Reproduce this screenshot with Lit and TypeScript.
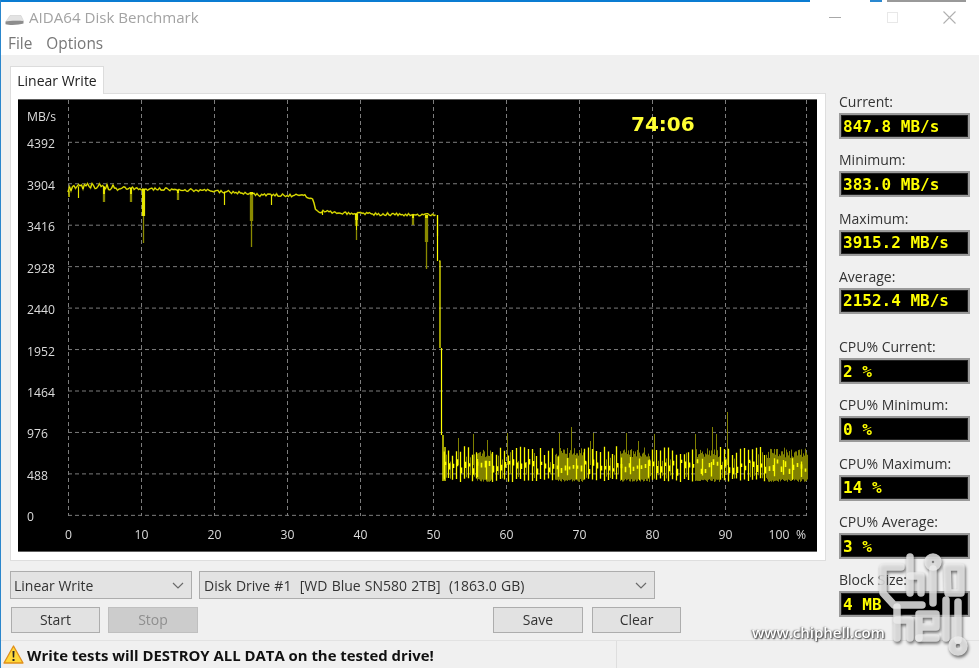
import { LitElement, html, css, svg } from "lit";
import { customElement } from "lit/decorators.js";

function mulberry(a: number) {
  return () => {
    a |= 0; a = (a + 0x6d2b79f5) | 0;
    let t = Math.imul(a ^ (a >>> 15), 1 | a);
    t = (t + Math.imul(t ^ (t >>> 7), 61 | t)) ^ t;
    return ((t ^ (t >>> 14)) >>> 0) / 4294967296;
  };
}

const anchors: [number, number][] = [
  [68, 191], [72, 187], [85, 186], [110, 187], [150, 189], [190, 190], [230, 192], [252, 194],
  [258, 195], [280, 195], [305, 196], [312, 198], [316, 211], [340, 213], [380, 214], [420, 215], [436, 215],
];
function topAt(x: number) {
  for (let i = 0; i < anchors.length - 1; i++) {
    const [a, b] = anchors[i], [c, d] = anchors[i + 1];
    if (x >= a && x <= c) return b + ((d - b) * (x - a)) / (c - a);
  }
  return 215;
}
// [x, bright bottom, dark bottom]
const dips: [number, number, number][] = [
  [68.5, 197, 197], [78, 198, 198], [103, 194, 202], [104, 194, 202], [130, 194, 202], [131, 194, 202],
  [142, 216, 216], [143, 216, 243], [144, 216, 216], [177, 193, 200], [178, 193, 200], [224, 205, 205],
  [250, 192, 221], [251, 192, 247], [252, 192, 221], [271, 205, 205], [322, 215, 215], [355, 220, 226],
  [356, 230, 240], [357, 220, 226], [412, 218, 225], [413, 218, 225], [425, 218, 242], [426, 218, 269],
  [427, 218, 242], [437, 236, 236],
];

function buildPaths() {
  const r = mulberry(91);
  let topBright = "";
  for (let x = 68; x <= 436; x += 1.5) {
    const amp = x < 120 ? 6 : 3;
    const y = topAt(x) + (r() - 0.5) * amp;
    topBright += `${topBright ? "L" : "M"}${x} ${y.toFixed(1)}`;
  }
  let dipDark = "", dipBright = "";
  for (const [x, b, d] of dips) {
    const y = topAt(x);
    dipBright += `M${x + 0.5} ${y}V${b}`;
    dipDark += `M${x + 0.5} ${y}V${d}`;
  }
  const steepBright = "M437.5 215V261M439 261L440 261V348M441.5 348V435";
  let dark = "", bright = "", band = "";
  const darkZones = [[477, 492], [555, 584], [620, 650], [695, 720], [767, 808]];
  const inDark = (x: number) => darkZones.some(([a, b]) => x >= a && x < b);
  for (let x = 443; x <= 807; x++) {
    const px = x + 0.5;
    if (inDark(x)) {
      dark += `M${px} ${(449 + r() * 9).toFixed(1)}V${(479 + r() * 3).toFixed(1)}`;
      if (x % 7 === 0) dark += `M${px} ${(447 + r() * 4).toFixed(1)}V481`;
      if (x % 9 === 0) bright += `M${px} ${(456 + r() * 6).toFixed(1)}V${(474 + r() * 6).toFixed(1)}`;
    } else {
      const k = x % 4;
      if (k === 0) {
        bright += `M${px} ${(446 + r() * 10).toFixed(1)}V${(478 + r() * 4).toFixed(1)}`;
      } else if (k === 2 && r() < 0.6) {
        dark += `M${px} ${(452 + r() * 12).toFixed(1)}V${(474 + r() * 5).toFixed(1)}`;
      }
    }
    if (x % 4 === 1) {
      const y = 459 + r() * 10;
      band += `M${px} ${y.toFixed(1)}v${(3 + r() * 4).toFixed(1)}`;
    }
  }
  for (const [x, y] of [[473, 434], [507, 433], [559, 433], [571, 427], [593, 433], [626, 433], [654, 434], [695, 434], [712, 427], [716, 434], [727, 412], [458, 438], [487, 440], [590, 441], [638, 441]]) {
    dark += `M${x + 0.5} ${y}V465`;
  }
  bright += "M443 435V481M445 447V481";
  return { topBright, dipDark, dipBright, steepBright, dark, bright, band };
}
const P = buildPaths();

const yTicks = [4392, 3904, 3416, 2928, 2440, 1952, 1464, 976, 488, 0];
const yAt = (i: number) => 142.3 + i * 41.45;
const xTicks = [0, 10, 20, 30, 40, 50, 60, 70, 80, 90];
const xAt = (i: number) => 68.5 + i * 73;

const topStats = [
  ["Current:", "847.8 MB/s"],
  ["Minimum:", "383.0 MB/s"],
  ["Maximum:", "3915.2 MB/s"],
  ["Average:", "2152.4 MB/s"],
];
const cpuStats = [
  ["CPU% Current:", "2 %"],
  ["CPU% Minimum:", "0 %"],
  ["CPU% Maximum:", "14 %"],
  ["CPU% Average:", "3 %"],
];

const chevron = svg`<svg class="chev" width="12" height="7" viewBox="0 0 12 7"><path d="M1 1l5 5 5-5" fill="none" stroke="#6a6a6a" stroke-width="1.2"/></svg>`;

@customElement("app-root")
export class AppRoot extends LitElement {
  static styles = css`
    :host {
      display: block; position: relative; width: 979px; height: 668px; overflow: hidden;
      background: #f0f0f0; color: #222;
      font-family: "Open Sans", "Noto Sans", sans-serif; font-size: 14px;
      filter: blur(0.35px);
    }
    .win { display: flex; flex-direction: column; height: 668px; border-left: 1px solid #2a86cc; box-sizing: border-box; }
    .strip {
      height: 2px; flex: none;
      background: linear-gradient(90deg, #0a7cd2 0 809px, #fff 809px 869px, #2a88d0 869px 881px, #fff 881px 886px, #999 886px 965px, #fff 965px);
    }
    .head { height: 53px; flex: none; background: #fff; display: flex; flex-direction: column; }
    .title { height: 28px; box-sizing: border-box; padding-top: 2px; display: flex; align-items: center; padding-left: 4px; gap: 5px; color: #a3a3a3; font-size: 15.1px; }
    .disk { margin-top: 6px; }
    .winbtns { margin-left: auto; display: flex; align-items: center; width: 150px; justify-content: space-between; padding-right: 23px; box-sizing: border-box; }
    .menu { display: flex; gap: 14px; padding-left: 7px; padding-top: 2px; box-sizing: border-box; color: #777; font-size: 15.4px; height: 25px; align-items: center; }
    .body { flex: 1; display: flex; padding-left: 9px; min-height: 0; }
    .left { width: 816px; flex: none; padding-top: 11px; box-sizing: border-box; }
    .tab {
      width: 94px; height: 28px; margin-bottom: -1px; box-sizing: border-box; background: #fff; position: relative; z-index: 1;
      border: 1px solid #dcdcdc; border-bottom: none; display: flex; align-items: center; justify-content: center; font-size: 14px; color: #222;
    }
    .panel { height: 468px; box-sizing: border-box; background: #fff; border: 1px solid #dedede; padding: 5px 8px 8px 7px; }
    .chart { display: block; width: 799px; height: 453px; background: #000; }
    .chart text { font-family: "Open Sans", "Noto Sans", sans-serif; font-size: 12.2px; fill: #dcdcdc; }
    .chart .time { font-family: "DejaVu Sans", sans-serif; font-weight: 700; font-size: 20px; fill: #ffff33; }
    .grid { stroke: #7c7c7c; stroke-width: 1; stroke-dasharray: 4 3; fill: none; }
    .row { display: flex; }
    .r1 { margin-top: 10px; gap: 7px; height: 28px; }
    .combo {
      box-sizing: border-box; height: 28px; background: #e3e3e3; border: 1px solid #adadad;
      display: flex; align-items: center; justify-content: space-between; padding: 0 7px 0 3px; color: #333; font-size: 14px; white-space: pre;
    }
    .c1 { width: 182px; }
    .c2 { width: 456px; word-spacing: .55px; padding-left: 4px; }
    .r2 { margin-top: 8px; padding-left: 1px; height: 26px; }
    .btn {
      box-sizing: border-box; width: 89px; height: 26px; padding-bottom: 2px; background: #e2e2e2; border: 1px solid #adadad;
      display: flex; align-items: center; justify-content: center; color: #333; font-size: 14px;
    }
    .btn.off { background: #cccccc; border-color: #bfbfbf; color: #8f8f8f; width: 90px; margin-left: 8px; }
    .btn.save { margin-left: 295px; width: 90px; }
    .btn.clear { margin-left: 9px; }
    .right { width: 131px; flex: none; margin-left: 13px; padding-top: 39px; box-sizing: border-box; }
    .stat { height: 58.3px; display: flex; flex-direction: column; justify-content: flex-start; }
    .stat .lab { height: 19px; line-height: 15.5px; color: #333; font-size: 14px; white-space: nowrap; }
    .val {
      box-sizing: border-box; height: 26px; background: #000; border: 2px solid #9a9a9a;
      box-shadow: inset 0 0 0 1px #222;
      font-family: "DejaVu Sans Mono", monospace; font-weight: 700; font-size: 16px; color: #ffff00;
      display: flex; align-items: center; padding-left: 2px; white-space: pre;
    }
    .gap { height: 12px; }
    .status { height: 28px; flex: none; display: flex; border-top: 1px solid #e2e2e2; box-sizing: border-box; }
    .msg { width: 616px; flex: none; border-right: 1px solid #dedede; display: flex; align-items: center; gap: 3px; padding-left: 2px; box-sizing: border-box; font-weight: 700; color: #111; font-size: 14.9px; white-space: nowrap; }
    .mark { position: absolute; pointer-events: none; }
    .logo { left: 870px; top: 552px; filter: drop-shadow(1px 2px 1.5px rgba(0,0,0,.65)); }
    .site { left: 752px; top: 622px; font-size: 15px; font-family: "Open Sans", sans-serif; color: #fff; font-weight: 600; text-shadow: 1px 1px 1.5px #333, -1px 0 1.5px #666; white-space: nowrap; }
  `;

  render() {
    const stat = ([l, v]: string[]) => html`<div class="stat"><div class="lab">${l}</div><div class="val">${v}</div></div>`;
    return html`
      <div class="win">
        <div class="strip"></div>
        <div class="head">
          <div class="title">
            <svg class="disk" width="19" height="12" viewBox="0 0 19 12">
              <path d="M1 7.5 5 1.5h11l2.5 5.5z" fill="#e3e3e3" stroke="#cfcfcf" stroke-width=".6"/>
              <path d="M.5 7.5C4 6.5 14 6.5 18.5 7v2.5c-4 1.5-14 2-18 .7z" fill="#8d8d8d"/>
            </svg>
            <span>AIDA64 Disk Benchmark</span>
            <div class="winbtns">
              <svg width="13" height="13" viewBox="0 0 13 13"><path d="M0 6.5h12" stroke="#a8a8a8" stroke-width="1"/></svg>
              <svg width="13" height="13" viewBox="0 0 13 13"><rect x="1.5" y="1.5" width="10" height="10" fill="none" stroke="#e8e8e8"/></svg>
              <svg width="13" height="13" viewBox="0 0 13 13"><path d="M.5.5l12 12M12.5.5l-12 12" stroke="#b0b0b0" stroke-width="1.1"/></svg>
            </div>
          </div>
          <div class="menu"><span>File</span><span>Options</span></div>
        </div>
        <div class="body">
          <div class="left">
            <div class="tab">Linear Write</div>
            <div class="panel">
              <svg class="chart" viewBox="18 99 799 453">
                <path d="M18 99.5H817M18 551.5H817" fill="none" stroke="#5e5e5e"/>
                ${xTicks.map((_, i) => svg`<path class="grid" d="M${xAt(i)} 100V516"/>`)}
                <path class="grid" d="M806.5 100V516"/>
                ${yTicks.map((_, i) => svg`<path class="grid" d="M68 ${yAt(i)}H807"/>`)}
                <text x="27" y="121">MB/s</text>
                ${yTicks.map((t, i) => svg`<text x="27" y=${yAt(i) + 6}>${t}</text>`)}
                ${xTicks.map((t, i) => svg`<text x=${xAt(i)} y="539" text-anchor="middle">${t}</text>`)}
                <text x="779" y="539" text-anchor="middle">100</text>
                <text x="801" y="539" text-anchor="middle">%</text>
                <text class="time" x="631" y="131">74:06</text>
                <g fill="none" stroke-linecap="butt">
                  <path d=${P.dipDark} stroke="#8a8a00" stroke-width="1.3"/>
                  <path d=${P.topBright} stroke="#8a8a00" stroke-width="1.6"/>
                  <path d=${P.dipBright} stroke="#e6e600" stroke-width="1"/>
                  <path d=${P.topBright} stroke="#ffff00" stroke-width=".8"/>
                  <path d=${P.steepBright} stroke="#ffff00" stroke-width="1.2"/>
                  <path d=${P.dark} stroke="#808000" stroke-width="1"/>
                  <path d=${P.bright} stroke="#fafa00" stroke-width="1.3"/>
                  <path d=${P.band} stroke="#ffff00" stroke-width="1.6"/>
                </g>
              </svg>
            </div>
            <div class="row r1">
              <div class="combo c1"><span>Linear Write</span>${chevron}</div>
              <div class="combo c2"><span>Disk Drive #1  [WD Blue SN580 2TB]  (1863.0 GB)</span>${chevron}</div>
            </div>
            <div class="row r2">
              <div class="btn">Start</div>
              <div class="btn off">Stop</div>
              <div class="btn save">Save</div>
              <div class="btn clear">Clear</div>
            </div>
          </div>
          <div class="right">
            ${topStats.map(stat)}
            <div class="gap"></div>
            ${cpuStats.map(stat)}
            ${stat(["Block Size:", "4 MB"])}
          </div>
        </div>
        <div class="status">
          <div class="msg">
            <svg width="21" height="19" viewBox="0 0 21 19">
              <path d="M10.5 1 20 18H1z" fill="#ffd83a" stroke="#e08f1a" stroke-width="1.3" stroke-linejoin="round"/>
              <path d="M9.5 6h2l-.3 6.5H9.8zM9.5 14h2v2h-2z" fill="#222"/>
            </svg>
            <span>Write tests will DESTROY ALL DATA on the tested drive!</span>
          </div>
        </div>
      </div>
      <div class="mark site">www.chiphell.com</div>
      <svg class="mark logo" width="100" height="110" viewBox="0 0 100 110">
        <g fill="none" stroke="#ececec" stroke-opacity=".82" stroke-width="7.5" stroke-linecap="round" stroke-linejoin="round">
          <path d="M31 15H13V41L24 53H52"/>
          <path d="M40 5V41"/>
          <path d="M40 24H51V41"/>
          <path d="M63 17V51"/>
          <circle cx="63" cy="10" r="5"/>
          <path d="M77 15H91V41H78Z"/>
          <path d="M27 55V86"/>
          <path d="M27 68H40V86"/>
          <path d="M49 86V62H66V75H49"/>
          <path d="M49 86H66"/>
          <path d="M76 48V86"/>
          <path d="M88 50V88"/>
          <circle cx="88" cy="94" r="6"/>
        </g>
      </svg>
    `;
  }
}
